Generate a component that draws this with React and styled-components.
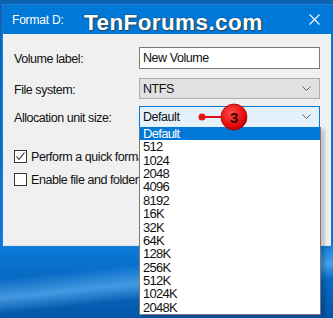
import styled, { createGlobalStyle } from 'styled-components';

const GlobalStyle = createGlobalStyle`
  html, body {
    margin: 0;
    padding: 0;
  }
  body {
    font-family: 'Liberation Sans', Arial, sans-serif;
  }
`;

const Desktop = styled.div`
  width: 333px;
  height: 318px;
  overflow: hidden;
  padding: 4px 0 0 2px;
  box-sizing: border-box;
  background:
    linear-gradient(174deg, transparent 0%, transparent 79%, rgba(110, 190, 250, 0.6) 84.5%, transparent 89%),
    linear-gradient(180deg, #0d62b0 0%, #0a74cf 60%, #0a7ad8 78%, #0662ba 92%, #0556a8 100%);
`;

const Window = styled.div`
  width: 340px;
  border: 1px solid #1c7fd4;
  border-right: none;
  background: #0078d7;
`;

const TitleBar = styled.div`
  height: 29px;
  display: flex;
  align-items: center;
  padding: 0 0 0 9px;
  color: #fff;
  font-size: 12px;
  letter-spacing: -0.2px;
  position: relative;
`;

const Watermark = styled.div`
  position: absolute;
  left: 81px;
  top: 5px;
  font-size: 22.5px;
  font-weight: bold;
  color: #fff;
  letter-spacing: 0.4px;
  text-shadow: 0 0 2px rgba(40, 40, 40, 0.6), 1px 1px 1px rgba(60, 60, 60, 0.7);
`;

const CloseButton = styled.div`
  position: absolute;
  left: 306px;
  top: 9px;
  width: 11px;
  height: 11px;
  display: flex;
`;

const Body = styled.div`
  height: 212px;
  width: 328px;
  box-sizing: border-box;
  background: #f0f0f0;
  border-left: 1px solid #e8f2fb;
  border-bottom: 1px solid #d6e6f5;
  padding: 13px 0 0 10px;
  font-size: 12.5px;
  letter-spacing: -0.45px;
  color: #111;
`;

const FieldRow = styled.div`
  display: grid;
  grid-template-columns: 125px 181px;
  align-items: center;
  height: ${(p) => p.$h}px;
  margin-bottom: ${(p) => p.$mb}px;
`;

const Label = styled.div`
  padding-top: 2px;
`;

const TextBox = styled.div`
  height: 22px;
  box-sizing: border-box;
  border: 1px solid #7a7a7a;
  background: #fff;
  padding: 0 3px;
  display: flex;
  align-items: center;
`;

const Combo = styled.div`
  position: relative;
  height: ${(p) => p.$h}px;
  box-sizing: border-box;
  border: 1px solid ${(p) => (p.$open ? '#0078d7' : '#adadad')};
  background: ${(p) => (p.$open ? '#e5f1fb' : '#e1e1e1')};
  padding: 0 8px 0 3px;
  display: flex;
  align-items: center;
  justify-content: space-between;
`;

const List = styled.div`
  position: absolute;
  left: -1px;
  top: 100%;
  width: 182px;
  box-sizing: border-box;
  border: 1px solid #7a7a7a;
  border-top: none;
  background: #fff;
  box-shadow: 4px 2px 3px rgba(0, 0, 0, 0.18);
  z-index: 2;
`;

const Item = styled.div`
  height: 13.36px;
  line-height: 13.36px;
  padding-left: 3px;
  font-size: 13px;
  letter-spacing: -0.7px;
  background: ${(p) => (p.$active ? '#0078d7' : 'transparent')};
  color: ${(p) => (p.$active ? '#fff' : '#111')};
`;

const Marker = styled.div`
  position: absolute;
  left: 58px;
  top: -5px;
  display: flex;
  z-index: 3;
`;

const CheckRow = styled.div`
  display: flex;
  align-items: center;
  gap: 4px;
  height: 13px;
  width: 126px;
  overflow: hidden;
  margin-top: ${(p) => p.$mt}px;
  white-space: nowrap;
`;

const Box = styled.div`
  width: 13px;
  height: 13px;
  box-sizing: border-box;
  border: 1px solid #333;
  background: #fff;
  display: flex;
  flex: none;
`;

const Chevron = () => (
  <svg width="9" height="6" viewBox="0 0 9 6">
    <polyline points="0.5,0.5 4.5,4.5 8.5,0.5" fill="none" stroke="#606060" strokeWidth="1" />
  </svg>
);

const sizes = ['Default', '512', '1024', '2048', '4096', '8192', '16K', '32K', '64K', '128K', '256K', '512K', '1024K', '2048K'];

export default function App() {
  return (
    <>
      <GlobalStyle />
      <Desktop>
        <Window>
          <TitleBar>
            Format D:
            <Watermark>TenForums.com</Watermark>
            <CloseButton>
              <svg width="11" height="11" viewBox="0 0 11 11">
                <path d="M0.5 0.5 L10.5 10.5 M10.5 0.5 L0.5 10.5" stroke="#fff" strokeWidth="1.1" />
              </svg>
            </CloseButton>
          </TitleBar>
          <Body>
            <FieldRow $h={22} $mb={9}>
              <Label>Volume label:</Label>
              <TextBox>New Volume</TextBox>
            </FieldRow>
            <FieldRow $h={21} $mb={7}>
              <Label>File system:</Label>
              <Combo $h={21}>
                NTFS
                <Chevron />
              </Combo>
            </FieldRow>
            <FieldRow $h={22} $mb={0}>
              <Label>Allocation unit size:</Label>
              <Combo $h={22} $open>
                Default
                <Chevron />
                <Marker>
                  <svg width="60" height="30" viewBox="0 0 60 30">
                    <defs>
                      <radialGradient id="red" cx="40%" cy="35%" r="70%">
                        <stop offset="0%" stopColor="#ff4a4a" />
                        <stop offset="70%" stopColor="#e60c0c" />
                        <stop offset="100%" stopColor="#b30000" />
                      </radialGradient>
                    </defs>
                    <line x1="4" y1="15" x2="24" y2="15" stroke="#e01010" strokeWidth="2" />
                    <circle cx="4" cy="15" r="3.5" fill="#e51212" />
                    <circle cx="36" cy="15" r="13" fill="url(#red)" stroke="#a80000" strokeWidth="0.8" />
                    <text x="36" y="20.5" textAnchor="middle" fontFamily="Liberation Sans, Arial, sans-serif" fontWeight="bold" fontSize="15" fill="#3a0000">3</text>
                  </svg>
                </Marker>
                <List>
                  {sizes.map((s, i) => (
                    <Item key={s} $active={i === 0}>{s}</Item>
                  ))}
                </List>
              </Combo>
            </FieldRow>
            <CheckRow $mt={22}>
              <Box>
                <svg width="11" height="11" viewBox="0 0 11 11">
                  <polyline points="1.5,5.5 4,8.5 9.5,1.5" fill="none" stroke="#222" strokeWidth="1.1" />
                </svg>
              </Box>
              Perform a quick format
            </CheckRow>
            <CheckRow $mt={10}>
              <Box />
              Enable file and folder compression
            </CheckRow>
          </Body>
        </Window>
      </Desktop>
    </>
  );
}
